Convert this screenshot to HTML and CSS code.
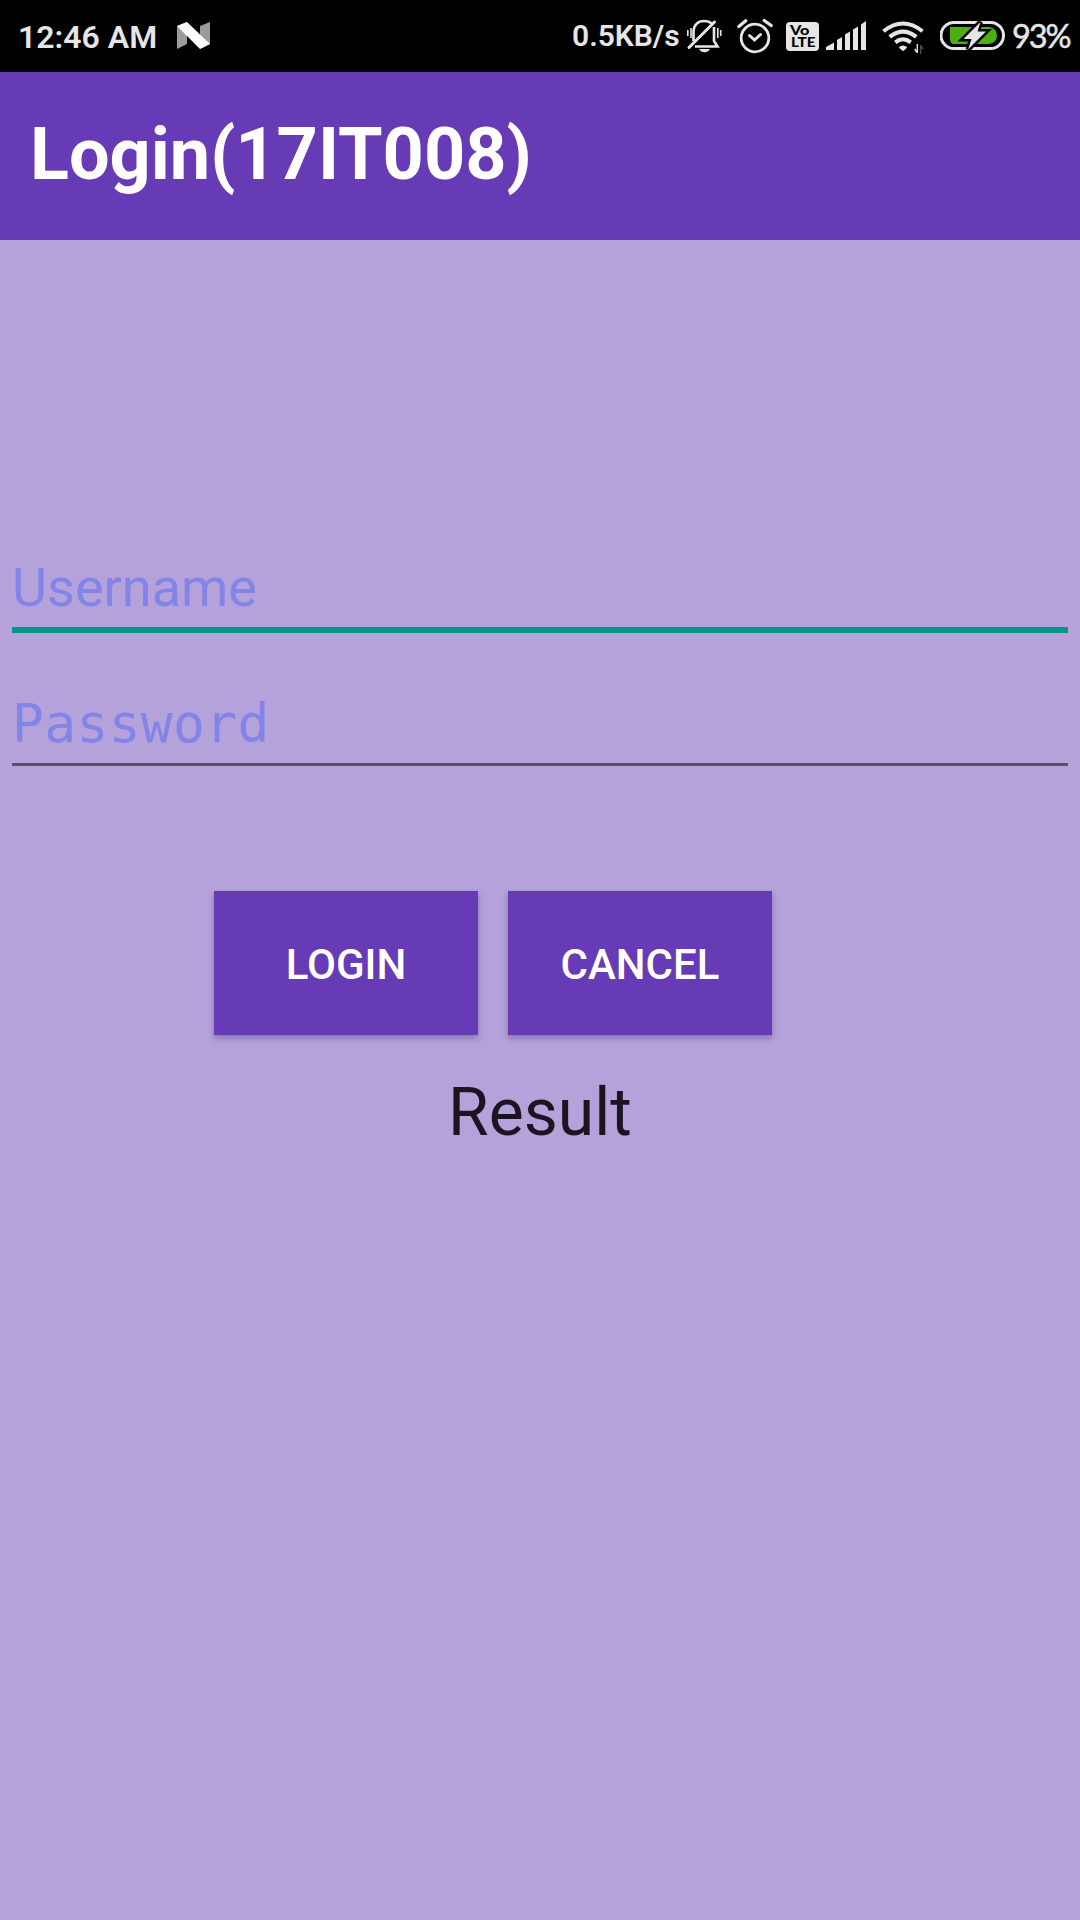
FILE: index.html
```html
<!DOCTYPE html>
<html lang="en">
<head>
<meta charset="utf-8">
<title>Login</title>
<link rel="stylesheet" href="styles.css">
</head>
<body>
<div class="status">
  <span class="clock">12:46 AM</span>
  <svg class="nougat" width="34" height="72" viewBox="177 0 34 72" aria-hidden="true">
    <path fill="#9c9c9c" d="M177 26l10-4v22l-10 5zM200 26l10-4v22l-10 5z"/>
    <path fill="#fff" d="M177 26l10-4 23 22-10 5z"/>
  </svg>
  <span class="speed">0.5KB/s</span>
  <svg class="bell" width="36" height="72" viewBox="686 0 36 72" fill="none" stroke="#e6e6e6" stroke-width="2.6" aria-hidden="true">
    <path d="M693.5 41V32c0-7 4.500-11 10.500-11 3.500 0 6.500 1 8.500 3.500M695 46.500h22.500l-3.500-5.500V27"/>
    <path stroke-width="3" stroke-linecap="round" d="M689 47.500l25.500-25.500"/>
    <path fill="#e6e6e6" stroke="none" d="M699 49h11q-2 3.300-5.500 3.300t-5.500-3.300z"/>
    <path stroke-width="1.600" d="M687.800 30v6M691 28v10M717.800 28v10M720.700 30v6"/>
  </svg>
  <svg class="alarm" width="38" height="72" viewBox="736 0 38 72" fill="none" stroke="#e6e6e6" stroke-width="2.800" stroke-linecap="round" aria-hidden="true">
    <circle cx="755" cy="38" r="13.800"/>
    <path stroke-width="3" d="M749.500 35.500l5 4.500 6-5.500"/>
    <path stroke-width="3.200" d="M738.800 26.500l7-5.800M771.200 25.500l-7-5"/>
  </svg>
  <svg class="volte" width="34" height="72" viewBox="786 0 34 72" aria-hidden="true">
    <rect x="786" y="22" width="33" height="29" rx="4" fill="#e6e6e6"/>
    <text class="volte-text" x="790" y="34.500" textLength="19.500" lengthAdjust="spacingAndGlyphs">Vo</text>
    <text class="volte-text" x="791" y="47.300" textLength="24.500" lengthAdjust="spacingAndGlyphs">LTE</text>
  </svg>
  <svg class="signal" width="42" height="72" viewBox="826 0 42 72" fill="#e6e6e6" aria-hidden="true">
    <path d="M826 50v-3l8-4.500V50zM837 50V40l5-3v13zM845 50V34.500l5-3V50zM853 50V29.500l5-3V50zM861 50V24.500l5-3.500V50z"/>
  </svg>
  <svg class="wifi" width="44" height="72" viewBox="882 0 44 72" fill="none" stroke="#e6e6e6" stroke-width="4" aria-hidden="true">
    <path d="M883.500 31.300q19.500-15.500 39 0M889.700 36.800q13.300-10.300 26.600 0M895.300 42.300q7.700-6 15.400 0"/>
    <path fill="#e6e6e6" stroke="none" d="M899 47q4-3 8 0 0 1.300-4 4.200-4-2.900-4-4.200z"/>
    <path stroke-width="1.400" d="M917.300 44v9M914.700 49l2 3"/>
    <path stroke="#4b4b4b" stroke-width="1.400" d="M920.700 54v-9M921 46l2 3"/>
  </svg>
  <svg class="battery" width="66" height="72" viewBox="939 0 66 72" aria-hidden="true">
    <rect x="940" y="22.500" width="62.500" height="26" rx="13" fill="#000" stroke="#e6e6e6" stroke-width="3"/>
    <path fill="#4caf13" d="M949 27h39q8 1.500 8 8.500t-8 8.500h-35q-4 0-4-5z"/>
    <path fill="#e6e6e6" stroke="#000" stroke-width="5" paint-order="stroke" stroke-linejoin="miter" d="M979.500 22l-17 17h8l-3.500 10.500 18-18h-8.500z"/>
  </svg>
  <span class="percent">93%</span>
</div>
<header class="appbar"><h1>Login(17IT008)</h1></header>
<main class="form">
  <div class="field active">Username</div>
  <div class="field password">Password</div>
  <div class="actions">
    <button class="btn">LOGIN</button>
    <button class="btn">CANCEL</button>
  </div>
  <p class="result">Result</p>
</main>
</body>
</html>
```
FILE: styles.css
```css
* { box-sizing: border-box; }
body {
  margin: 0;
  width: 1080px;
  height: 1920px;
  display: flex;
  flex-direction: column;
  background: #b5a2db;
  font-family: Roboto, "Liberation Sans", sans-serif;
  overflow: hidden;
}
.status {
  display: flex;
  height: 72px;
  flex: none;
  background: #000;
  color: #e6e6e6;
  white-space: nowrap;
  line-height: 72px;
}
.status svg { flex: none; display: block; }
.status span { flex: none; }
.clock { width: 158px; padding-left: 18px; font-size: 32px; font-weight: 600; line-height: 74px; }
.nougat { margin-left: 19px; }
.speed { width: 114px; margin-left: 361px; font-size: 30px; font-weight: 600; }
.alarm { margin-left: 14px; }
.volte { margin-left: 12px; }
.volte-text { font: 900 12.5px/1 Lato, sans-serif; fill: #000; }
.signal { margin-left: 6px; }
.wifi { margin-left: 14px; }
.battery { margin-left: 14px; }
.percent {
  margin-left: 6px;
  font-family: Lato, sans-serif;
  font-size: 32.5px;
  letter-spacing: -2.1px;
  line-height: 71px;
  -webkit-text-stroke: .5px #e6e6e6;
}
.appbar {
  display: flex;
  align-items: center;
  height: 168px;
  flex: none;
  padding-left: 30px;
  background: #673ab6;
  color: #fff;
}
.appbar h1 { margin: 0; font-size: 72px; font-weight: 700; line-height: 84px; padding-bottom: 2px; }
.form { display: flex; flex-direction: column; padding: 303px 12px 0; }
.field {
  height: 90px;
  border-bottom: 6px solid #069588;
  color: #8384e8;
  font-size: 54px;
  line-height: 90px;
}
.password {
  height: 93px;
  margin-top: 40px;
  border-bottom: 3px solid #5b4c6b;
  font-family: "DejaVu Sans Mono", monospace;
  font-size: 53px;
  letter-spacing: .3px;
  line-height: 101px;
}
.actions { display: flex; gap: 30px; margin: 125px 0 0 202px; }
.btn {
  width: 264px;
  height: 144px;
  padding: 3px 0 0;
  border: 0;
  background: #673ab6;
  color: #fff;
  font: 500 42px Roboto, sans-serif;
  box-shadow: 0 3px 6px rgba(45, 25, 75, .35);
}
.result { margin: 39px 0 0; text-align: center; font-size: 66px; line-height: 78px; color: #1b1522; }
```
